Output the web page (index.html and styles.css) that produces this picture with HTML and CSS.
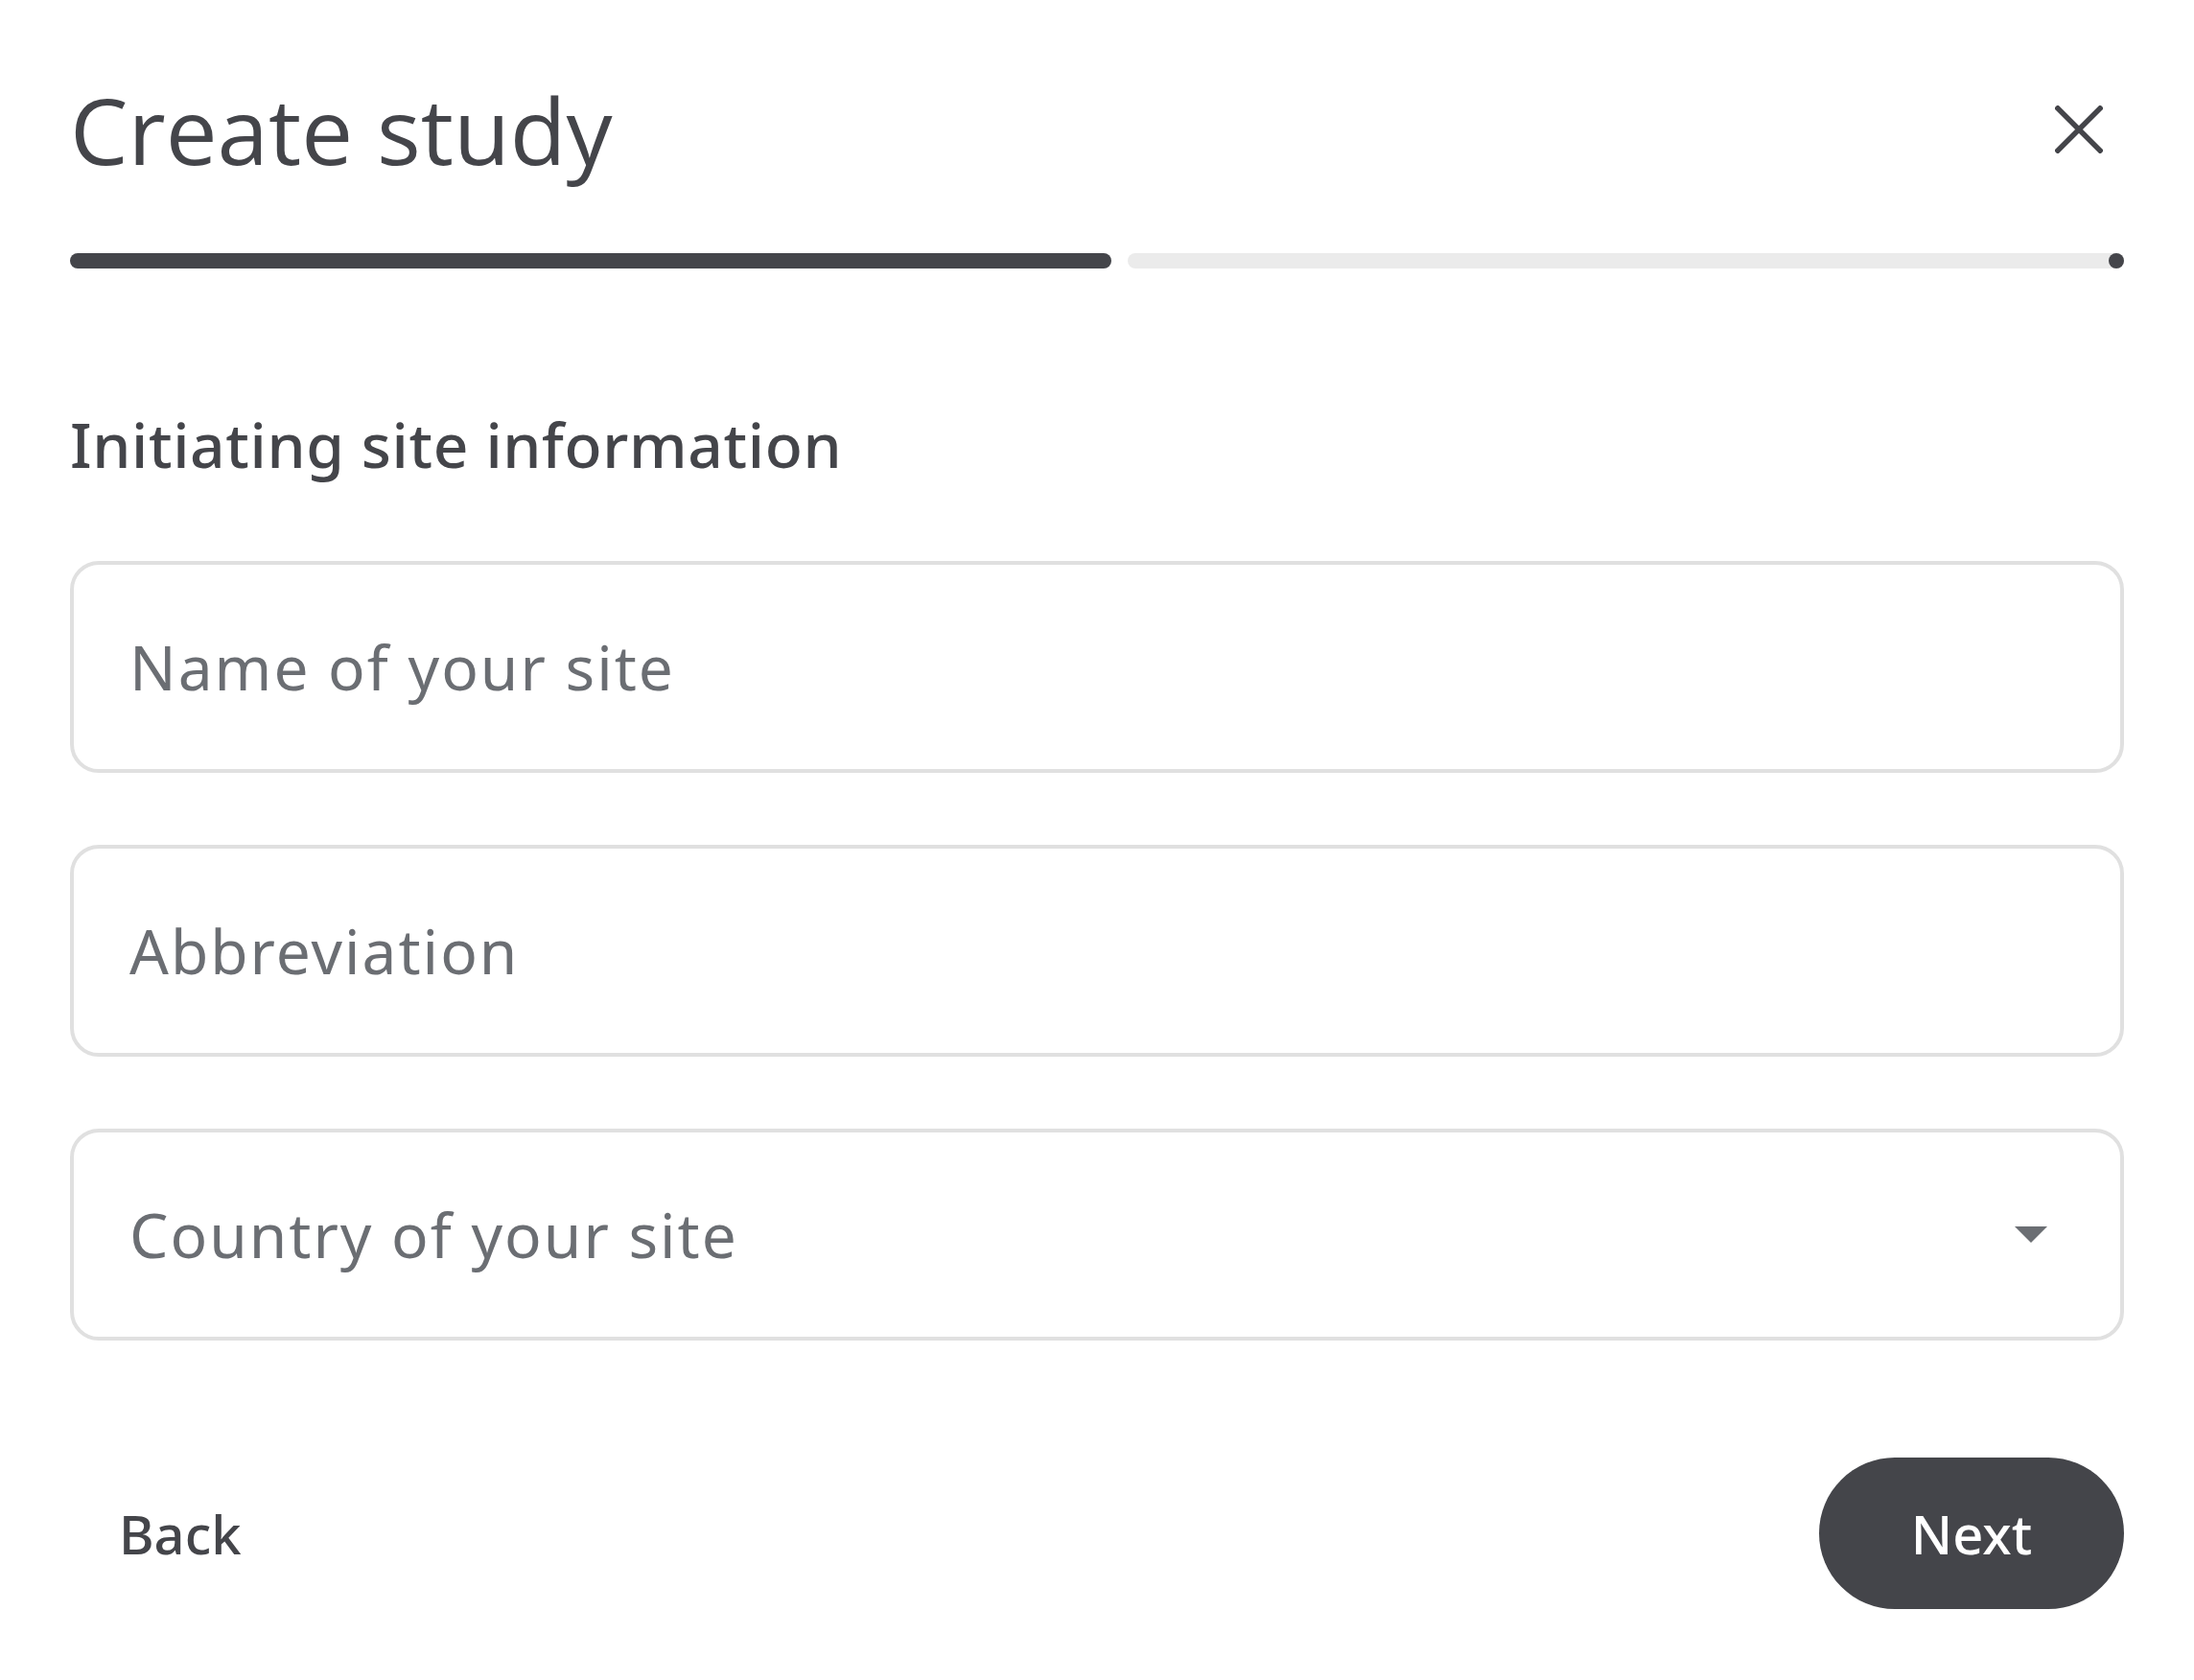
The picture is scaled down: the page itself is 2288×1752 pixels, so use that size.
FILE: index.html
```html
<!DOCTYPE html>
<html lang="en">
<head>
<meta charset="utf-8">
<title>Create study</title>
<link rel="stylesheet" href="styles.css">
</head>
<body>
<div class="dialog">
  <header class="header">
    <h1 class="title">Create study</h1>
    <button class="close" aria-label="Close">
      <svg width="50" height="50" viewBox="0 0 50 50"><path d="M1 1L49 49M49 1L1 49" stroke="#44454a" stroke-width="5.5" fill="none"/></svg>
    </button>
  </header>
  <div class="progress">
    <div class="progress-done"></div>
    <div class="progress-rest"><span class="progress-stop"></span></div>
  </div>
  <h2 class="subtitle">Initiating site information</h2>
  <div class="form">
    <div class="field"><span class="placeholder">Name of your site</span></div>
    <div class="field"><span class="placeholder">Abbreviation</span></div>
    <div class="field field-select"><span class="placeholder">Country of your site</span><span class="caret"></span></div>
  </div>
  <div class="actions">
    <button class="btn-back">Back</button>
    <button class="btn-next">Next</button>
  </div>
</div>
</body>
</html>
```
FILE: styles.css
```css
html, body {
  margin: 0;
  padding: 0;
  background: #ffffff;
}
body {
  font-family: "Noto Sans", "Open Sans", sans-serif;
  color: #44454a;
}
.dialog {
  padding: 69px 73px 0 73px;
}
.header {
  display: flex;
  justify-content: space-between;
  align-items: center;
}
.title {
  margin: 0;
  font-family: "Open Sans", "Noto Sans", sans-serif;
  font-weight: 400;
  font-size: 96px;
  line-height: normal;
  color: #44454a;
}
.close {
  width: 94px;
  height: 94px;
  border: 0;
  padding: 0;
  background: transparent;
  display: flex;
  align-items: center;
  justify-content: center;
}
.progress {
  margin-top: 64px;
  display: flex;
  gap: 17px;
  height: 16px;
}
.progress-done {
  width: 1086px;
  background: #44454a;
  border-radius: 8px;
}
.progress-rest {
  flex: 1;
  background: #ebebeb;
  border-radius: 8px;
  display: flex;
  justify-content: flex-end;
}
.progress-stop {
  width: 16px;
  height: 16px;
  border-radius: 50%;
  background: #44454a;
}
.subtitle {
  margin: 140px 0 0 0;
  font-size: 64px;
  font-weight: 500;
  letter-spacing: 0.65px;
  line-height: normal;
  color: #44454a;
}
.form {
  margin-top: 78px;
  display: flex;
  flex-direction: column;
  gap: 75px;
}
.field {
  box-sizing: border-box;
  height: 221px;
  border: 4px solid #e0e0e0;
  border-radius: 30px;
  padding: 0 76px 0 58px;
  display: flex;
  align-items: center;
  justify-content: space-between;
}
.placeholder {
  font-size: 64px;
  letter-spacing: 2px;
  color: #6b6e73;
  line-height: normal;
}
.caret {
  width: 0;
  height: 0;
  border-left: 17px solid transparent;
  border-right: 17px solid transparent;
  border-top: 17px solid #6b6e73;
}
.actions {
  margin-top: 122px;
  display: flex;
  justify-content: space-between;
  align-items: center;
}
.btn-back {
  font-family: "Noto Sans", sans-serif;
  font-size: 56px;
  font-weight: 500;
  color: #44454a;
  background: transparent;
  border: 0;
  padding: 0 51px;
  height: 158px;
}
.btn-next {
  font-family: "Noto Sans", sans-serif;
  font-size: 56px;
  font-weight: 500;
  color: #ffffff;
  background: #44454a;
  border: 0;
  border-radius: 79px;
  width: 318px;
  height: 158px;
  padding: 0;
}
```
